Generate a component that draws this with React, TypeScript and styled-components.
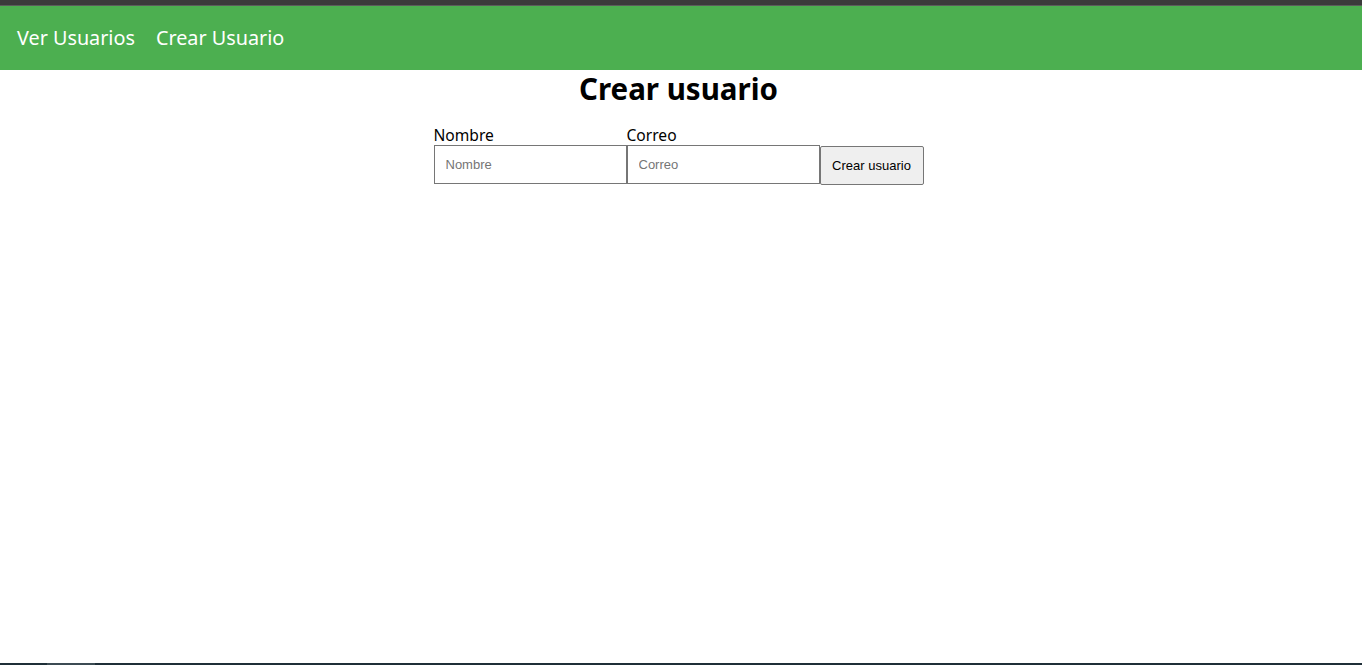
import React from "react";
import styled, { createGlobalStyle } from "styled-components";

const GlobalStyle = createGlobalStyle`
  html, body { margin: 0; padding: 0; background: #fff; }
  body { font-family: "Noto Sans", "Open Sans", sans-serif; height: 665px; overflow: hidden; }
  #root { height: 665px; }
`;

const Page = styled.div`
  display: flex;
  flex-direction: column;
  height: 665px;
`;

const TopStrip = styled.div`
  height: 5px;
  background: #3b3b3b;
  border-bottom: 1px solid #5c5c5c;
`;

const NavBar = styled.nav`
  height: 64px;
  box-sizing: border-box;
  padding: 0 0 2px 17px;
  background: #4caf50;
  display: flex;
  align-items: center;
  gap: 21px;
`;

const NavLink = styled.a`
  color: #fff;
  font-size: 19.8px;
  text-decoration: none;
  cursor: pointer;
`;

const Main = styled.main`
  flex: 1;
  display: flex;
  flex-direction: column;
  align-items: center;
  padding-right: 5px;
`;

const Title = styled.h1`
  margin: 0 0 18px;
  font-size: 29.5px;
  font-weight: 700;
  color: #000;
  line-height: 38px;
`;

const Form = styled.form`
  display: flex;
  align-items: flex-end;
`;

const Field = styled.div`
  display: flex;
  flex-direction: column;
`;

const Label = styled.label`
  font-size: 15.6px;
  line-height: 19px;
  color: #000;
`;

const Input = styled.input`
  box-sizing: border-box;
  width: 193px;
  height: 39px;
  border: 1px solid #767676;
  border-radius: 0;
  padding: 0 11px;
  font-family: "Liberation Sans", Arial, sans-serif;
  font-size: 13px;
  color: #000;
  &::placeholder { color: #757575; }
`;

const Button = styled.button`
  box-sizing: border-box;
  width: 104px;
  height: 39px;
  margin-bottom: -1px;
  background: #efefef;
  border: 1px solid #767676;
  border-radius: 2px;
  font-family: "Liberation Sans", Arial, sans-serif;
  font-size: 13px;
  color: #000;
  padding: 0;
`;

const BottomStrip = styled.div`
  height: 2px;
  background: #1f2f38;
  display: flex;
`;

const BottomTab = styled.div`
  margin-left: 47px;
  width: 48px;
  background: #3c4b53;
`;

export default function App() {
  return (
    <>
      <GlobalStyle />
      <Page>
        <TopStrip />
        <NavBar>
          <NavLink>Ver Usuarios</NavLink>
          <NavLink>Crear Usuario</NavLink>
        </NavBar>
        <Main>
          <Title>Crear usuario</Title>
          <Form onSubmit={(e) => e.preventDefault()}>
            <Field>
              <Label htmlFor="nombre">Nombre</Label>
              <Input id="nombre" placeholder="Nombre" />
            </Field>
            <Field>
              <Label htmlFor="correo">Correo</Label>
              <Input id="correo" placeholder="Correo" />
            </Field>
            <Button type="submit">Crear usuario</Button>
          </Form>
        </Main>
        <BottomStrip>
          <BottomTab />
        </BottomStrip>
      </Page>
    </>
  );
}
